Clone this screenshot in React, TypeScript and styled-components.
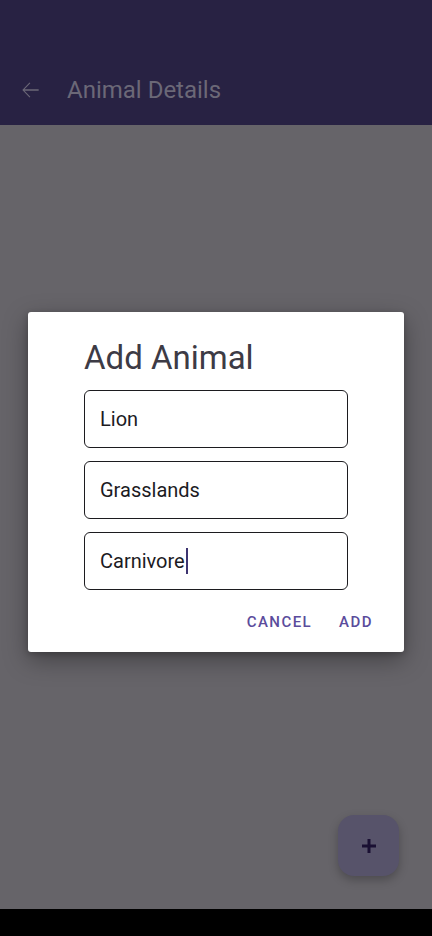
import React from "react";
import styled, { createGlobalStyle } from "styled-components";

const Global = createGlobalStyle`
  html, body { margin: 0; padding: 0; background: #000; }
  body { font-family: Roboto, "Noto Sans", sans-serif; }
  * { box-sizing: border-box; }
`;

const Screen = styled.div`
  position: relative;
  width: 432px;
  height: 936px;
  display: flex;
  flex-direction: column;
  overflow: hidden;
`;

const AppBar = styled.header`
  height: 125px;
  background: #282243;
  display: flex;
  align-items: flex-end;
  padding: 0 0 15px 17px;
`;

const BarRow = styled.div`
  height: 40px;
  display: flex;
  align-items: center;
  gap: 24px;
`;

const BarTitle = styled.h1`
  margin: 0;
  font-size: 24px;
  font-weight: 400;
  color: #6b6877;
`;

const Body = styled.main`
  flex: 1;
  background: #666469;
`;

const NavBar = styled.div`
  height: 27px;
  background: #000;
`;

const Overlay = styled.div`
  position: absolute;
  inset: 0;
  display: flex;
  justify-content: flex-start;
  padding: 312px 0 0 28px;
`;

const Dialog = styled.section`
  width: 376px;
  height: 340px;
  background: #fff;
  border-radius: 3px;
  box-shadow: 0 8px 24px rgba(0, 0, 0, 0.35), 0 2px 6px rgba(0, 0, 0, 0.2);
  display: flex;
  flex-direction: column;
  padding: 26px 31px 0 56px;
`;

const Title = styled.h2`
  margin: 0 0 12px;
  font-size: 33px;
  line-height: 40px;
  font-weight: 400;
  color: #3d3b45;
`;

const Fields = styled.div`
  display: flex;
  flex-direction: column;
  gap: 13px;
  width: 264px;
`;

const Field = styled.div`
  height: 58px;
  border: 1.5px solid #1c1b1f;
  border-radius: 6px;
  display: flex;
  align-items: center;
  padding-left: 15px;
  font-size: 20px;
  color: #1c1b1f;
`;

const Caret = styled.span`
  display: inline-block;
  width: 2px;
  height: 26px;
  margin-left: 1px;
  background: #3d3470;
  vertical-align: middle;
`;

const Actions = styled.div`
  display: flex;
  justify-content: flex-end;
  gap: 27px;
  margin-top: 22px;
`;

const TextButton = styled.button`
  border: 0;
  background: none;
  padding: 0;
  font-family: Roboto, sans-serif;
  font-size: 15px;
  font-weight: 500;
  letter-spacing: 1.45px;
  color: #5b4c9c;
  line-height: 20px;
`;

const Fab = styled.div`
  position: absolute;
  left: 338px;
  top: 815px;
  width: 61px;
  height: 61px;
  border-radius: 16px;
  background: #57536a;
  box-shadow: 0 4px 10px rgba(0, 0, 0, 0.25);
  display: flex;
  align-items: center;
  justify-content: center;
`;

export default function App() {
  return (
    <>
      <Global />
      <Screen>
        <AppBar>
          <BarRow>
            <svg width="26" height="26" viewBox="0 0 24 24">
              <path d="M20 11.25H6.9l5.4-5.4-.75-.75L4.9 12l6.65 6.9.75-.75-5.4-5.4H20v-1.5z" fill="#6b6877" />
            </svg>
            <BarTitle>Animal Details</BarTitle>
          </BarRow>
        </AppBar>
        <Body />
        <NavBar />
        <Fab>
          <svg width="16" height="16" viewBox="0 0 16 16">
            <path d="M6.5 1h3v5.5H15v3H9.5V15h-3V9.5H1v-3h5.5z" fill="#1a1033" />
          </svg>
        </Fab>
        <Overlay>
          <Dialog>
            <Title>Add Animal</Title>
            <Fields>
              <Field>Lion</Field>
              <Field>Grasslands</Field>
              <Field>
                Carnivore<Caret />
              </Field>
            </Fields>
            <Actions>
              <TextButton>CANCEL</TextButton>
              <TextButton>ADD</TextButton>
            </Actions>
          </Dialog>
        </Overlay>
      </Screen>
    </>
  );
}
